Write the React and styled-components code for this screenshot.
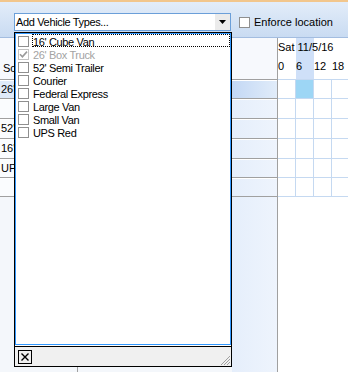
import React from "react";
import styled, { createGlobalStyle } from "styled-components";

const GlobalStyle = createGlobalStyle`
  html, body { margin: 0; padding: 0; background: #fff; }
  body {
    font-family: "Liberation Sans", Arial, sans-serif;
    font-size: 11px;
    color: #000;
  }
`;

const vehicleTypes = [
  { name: "16' Cube Van", focused: true },
  { name: "26' Box Truck", checked: true, disabled: true },
  { name: "52' Semi Trailer" },
  { name: "Courier" },
  { name: "Federal Express" },
  { name: "Large Van" },
  { name: "Small Van" },
  { name: "UPS Red" },
];

// resource rows behind the drop-down, heights in px (top border included)
const resourceRows = [
  { label: "26' Box Truck", h: 19, selected: true, slot: 1 },
  { label: "", h: 20 },
  { label: "52' Semi Trailer", h: 20 },
  { label: "16' Cube Van", h: 20 },
  { label: "UPS Red", h: 19 },
  { label: "", h: 19 },
];

const hours = ["0", "6", "12", "18", "0", "6"];

const Screen = styled.div`
  width: 348px;
  height: 372px;
  display: flex;
  flex-direction: column;
  overflow: hidden;
`;

const Toolbar = styled.div`
  position: relative;
  z-index: 2;
  height: 38px;
  box-sizing: border-box;
  border-top: 2px solid #f2c68c;
  border-bottom: 1px solid #a3bde0;
  background: linear-gradient(#e3edf9, #c9dbf2);
  display: flex;
  align-items: flex-start;
  padding-left: 14px;
`;

const ComboWrap = styled.div`
  position: relative;
  margin-top: 11px;
`;

const Combo = styled.div`
  width: 217px;
  height: 18px;
  box-sizing: border-box;
  border: 1px solid #6b9fd9;
  background: #fff;
  display: flex;
`;

const ComboText = styled.div`
  flex: 1;
  padding: 1px 0 0 1px;
  line-height: 15px;
  letter-spacing: -0.35px;
  white-space: nowrap;
`;

const ArrowButton = styled.div`
  width: 15px;
  background: #ebebeb;
  display: flex;
  align-items: center;
  justify-content: center;
`;

const Popup = styled.div`
  position: absolute;
  top: calc(100% + 1px);
  left: 0;
  width: 218px;
  height: 335px;
  box-sizing: border-box;
  border: 1px solid #000;
  background: #fff;
  display: flex;
  flex-direction: column;
`;

const List = styled.div`
  height: 312px;
  box-sizing: border-box;
  border: 1px solid #3399ff;
`;

const Item = styled.div`
  height: 13px;
  display: flex;
  align-items: flex-start;
  color: ${(p) => (p.$disabled ? "#a3a3a3" : "#000")};
`;

const Box = styled.div`
  width: 11px;
  height: 11px;
  box-sizing: border-box;
  border: 1px solid ${(p) => (p.$disabled ? "#c2c2c2" : "#8f8f8f")};
  background: #fff;
  margin: ${(p) => p.$m || "2px 3px 0 2px"};
  display: flex;
  align-items: center;
  justify-content: center;
  flex: none;
`;

const ItemLabel = styled.div`
  flex: 1;
  height: 13px;
  box-sizing: border-box;
  border: 1px dotted ${(p) => (p.$focused ? "#000" : "transparent")};
  padding-top: 2px;
  line-height: 11px;
  letter-spacing: -0.35px;
  white-space: nowrap;
`;

const Footer = styled.div`
  flex: 1;
  margin-top: 1px;
  border-top: 1px solid #000;
  background: #f0f0f0;
  display: flex;
  justify-content: space-between;
`;

const CloseButton = styled.div`
  width: 14px;
  height: 14px;
  box-sizing: border-box;
  border: 1px solid #000;
  margin: 3px 0 0 3px;
  display: flex;
  align-items: center;
  justify-content: center;
`;

const Grip = styled.div`
  align-self: flex-end;
  width: 12px;
  height: 12px;
  display: flex;
`;

const EnforceLabel = styled.div`
  margin: 14px 0 0 4px;
  line-height: 13px;
  white-space: nowrap;
`;

const Body = styled.div`
  flex: 1;
  display: flex;
  min-height: 0;
`;

const LeftPanel = styled.div`
  width: 278px;
  box-sizing: border-box;
  border-right: 1px solid #a0a0a0;
  display: flex;
  flex-direction: column;
`;

const columns = "78px 154px 1fr";

const PanelHeader = styled.div`
  height: 41px;
  display: grid;
  grid-template-columns: ${columns};
  background: #f7f9fd;
`;

const HeaderCell = styled.div`
  align-self: end;
  padding: 0 0 4px 3px;
  line-height: 13px;
  white-space: nowrap;
  overflow: hidden;
`;

const PanelRow = styled.div`
  height: ${(p) => p.$h}px;
  box-sizing: border-box;
  border-top: 1px solid #a0a0a0;
  display: grid;
  grid-template-columns: ${columns};
`;

const cellBg = (p) => {
  if (p.$col === "c")
    return p.$selected
      ? "linear-gradient(to right, #c3d8f5, #e1ecf9)"
      : "linear-gradient(to right, #e5eefb, #eef4fd)";
  if (p.$selected) return "#dfeaf9";
  return p.$fill ? "#f4f7fb" : "#fafcfe";
};

const PanelCell = styled.div`
  background: ${cellBg};
  box-shadow: ${(p) => (p.$fill ? "none" : "inset 0 1px 0 #fff")};
  border-right: ${(p) => (p.$col === "a" ? "1px solid #a0a0a0" : "none")};
  padding-left: 1px;
  line-height: ${(p) => p.$h - 1}px;
  white-space: nowrap;
  overflow: hidden;
`;

const PanelFill = styled.div`
  flex: 1;
  border-top: 1px solid #a0a0a0;
  display: grid;
  grid-template-columns: ${columns};
`;

const Timeline = styled.div`
  flex: 1;
  display: flex;
  flex-direction: column;
  overflow: hidden;
  background: #fff;
`;

const TimeHeader = styled.div`
  height: 41px;
  display: grid;
  grid-template-columns: repeat(6, 18px);
  grid-template-rows: 22px 19px;
`;

const ColumnShade = styled.div`
  grid-column: ${(p) => p.$col};
  grid-row: 1 / 3;
  background: #cfe0f8;
`;

const DateLabel = styled.div`
  grid-column: 1 / -1;
  grid-row: 1;
  z-index: 1;
  padding-top: 3px;
  line-height: 13px;
  white-space: nowrap;
`;

const HourLabel = styled.div`
  grid-column: ${(p) => p.$col};
  grid-row: 2;
  z-index: 1;
  line-height: 13px;
  white-space: nowrap;
`;

const TimeRow = styled.div`
  height: ${(p) => p.$h}px;
  box-sizing: border-box;
  border-top: 1px solid #c5d9f1;
  display: flex;
`;

const TimeCell = styled.div`
  width: 18px;
  flex: none;
  box-sizing: border-box;
  border-right: 1px solid #c5d9f1;
  background: ${(p) => (p.$active ? "#9dd6f5" : "#fff")};
`;

const TimeFill = styled.div`
  flex: 1;
  border-top: 1px solid #c5d9f1;
`;

const Check = ({ color }) => (
  <svg width="9" height="9" viewBox="0 0 9 9">
    <path d="M1 4.2 L3.4 6.8 L8 1.6" fill="none" stroke={color} strokeWidth="1.6" />
  </svg>
);

export default function App() {
  return (
    <Screen>
      <GlobalStyle />
      <Toolbar>
        <ComboWrap>
          <Combo>
            <ComboText>Add Vehicle Types...</ComboText>
            <ArrowButton>
              <svg width="7" height="4" viewBox="0 0 7 4">
                <path d="M0 0 H7 L3.5 4 Z" fill="#000" />
              </svg>
            </ArrowButton>
          </Combo>
          <Popup>
            <List>
              {vehicleTypes.map((v) => (
                <Item key={v.name} $disabled={v.disabled}>
                  <Box $disabled={v.disabled}>
                    {v.checked && <Check color="#9a9a9a" />}
                  </Box>
                  <ItemLabel $focused={v.focused}>{v.name}</ItemLabel>
                </Item>
              ))}
            </List>
            <Footer>
              <CloseButton>
                <svg width="8" height="8" viewBox="0 0 8 8">
                  <path d="M0.5 0.5 L7.5 7.5 M7.5 0.5 L0.5 7.5" stroke="#000" strokeWidth="1.4" />
                </svg>
              </CloseButton>
              <Grip>
                <svg width="12" height="12" viewBox="0 0 12 12">
                  <path d="M11 2 L2 11 M11 5 L5 11 M11 8 L8 11" stroke="#a0a0a0" strokeWidth="1" />
                </svg>
              </Grip>
            </Footer>
          </Popup>
        </ComboWrap>
        <Box $m="15px 0 0 8px" />
        <EnforceLabel>Enforce location</EnforceLabel>
      </Toolbar>

      <Body>
        <LeftPanel>
          <PanelHeader>
            <HeaderCell>Schedule</HeaderCell>
            <HeaderCell />
            <HeaderCell />
          </PanelHeader>
          {resourceRows.map((r, i) => (
            <PanelRow key={i} $h={r.h}>
              <PanelCell $col="a" $h={r.h} $selected={r.selected}>
                {r.label}
              </PanelCell>
              <PanelCell $col="b" $h={r.h} $selected={r.selected} />
              <PanelCell $col="c" $h={r.h} $selected={r.selected} />
            </PanelRow>
          ))}
          <PanelFill>
            <PanelCell $col="a" $fill />
            <PanelCell $col="b" $fill />
            <PanelCell $col="c" $fill />
          </PanelFill>
        </LeftPanel>

        <Timeline>
          <TimeHeader>
            <ColumnShade $col={2} />
            <DateLabel>Sat 11/5/16</DateLabel>
            {hours.map((h, i) => (
              <HourLabel key={i} $col={i + 1}>
                {h}
              </HourLabel>
            ))}
          </TimeHeader>
          {resourceRows.map((r, i) => (
            <TimeRow key={i} $h={r.h}>
              {hours.map((_, j) => (
                <TimeCell key={j} $active={r.slot === j} />
              ))}
            </TimeRow>
          ))}
          <TimeFill />
        </Timeline>
      </Body>
    </Screen>
  );
}
